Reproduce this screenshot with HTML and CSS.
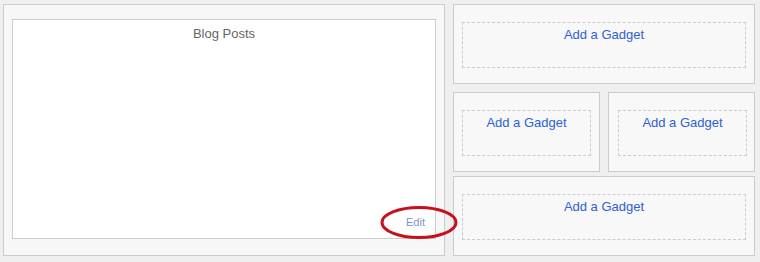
FILE: index.html
```html
<!DOCTYPE html>
<html>
<head>
<meta charset="utf-8">
<link rel="stylesheet" href="styles.css">
</head>
<body>
<div class="layout">
  <div class="main-panel">
    <div class="posts">
      <div class="posts-title">Blog Posts</div>
      <div class="posts-edit">Edit</div>
    </div>
  </div>
  <div class="side">
    <div class="gadget-panel"><div class="gadget">Add a Gadget</div></div>
    <div class="gadget-row">
      <div class="gadget-panel"><div class="gadget">Add a Gadget</div></div>
      <div class="gadget-panel right"><div class="gadget">Add a Gadget</div></div>
    </div>
    <div class="gadget-panel"><div class="gadget">Add a Gadget</div></div>
  </div>
</div>
<svg class="mark" width="84" height="38" viewBox="0 0 84 38">
  <ellipse cx="41" cy="18.5" rx="37" ry="15" fill="none" stroke="#c8101c" stroke-width="3"/>
</svg>
</body>
</html>
```

FILE: styles.css
```css
html, body {
  margin: 0;
  padding: 0;
  background: #efefef;
  font-family: "Liberation Sans", Arial, sans-serif;
}
body {
  position: relative;
  width: 760px;
  height: 262px;
  overflow: hidden;
}
.layout {
  display: flex;
  padding: 4px 0 0 3px;
  gap: 8px;
}
.main-panel {
  box-sizing: border-box;
  width: 442px;
  height: 252px;
  background: #f7f7f7;
  border: 1px solid #cccccc;
  padding: 14px 8px 16px 8px;
  display: flex;
}
.posts {
  flex: 1;
  background: #ffffff;
  border: 1px solid #cccccc;
  display: flex;
  flex-direction: column;
}
.posts-title {
  text-align: center;
  font-size: 13px;
  color: #666666;
  line-height: 15px;
  padding-top: 6px;
}
.posts-edit {
  margin-top: auto;
  align-self: flex-end;
  font-size: 11px;
  line-height: 13px;
  color: #7f92cf;
  padding: 0 10px 9px 0;
}
.side {
  width: 302px;
  display: flex;
  flex-direction: column;
}
.gadget-row {
  display: flex;
  gap: 8px;
  margin: 8px 0 4px 0;
}
.gadget-row .gadget-panel {
  flex: 1;
}
.gadget-panel {
  box-sizing: border-box;
  height: 80px;
  background: #f8f8f8;
  border: 1px solid #cccccc;
  padding: 17px 8px 15px 8px;
  display: flex;
}
.gadget-panel.right {
  padding-left: 9px;
  padding-right: 7px;
}
.gadget {
  flex: 1;
  border: 1px dashed #cccccc;
  text-align: center;
  font-size: 13px;
  line-height: 15px;
  color: #2f5fd6;
  padding-top: 4px;
}
.mark {
  position: absolute;
  left: 378px;
  top: 204px;
}
```
